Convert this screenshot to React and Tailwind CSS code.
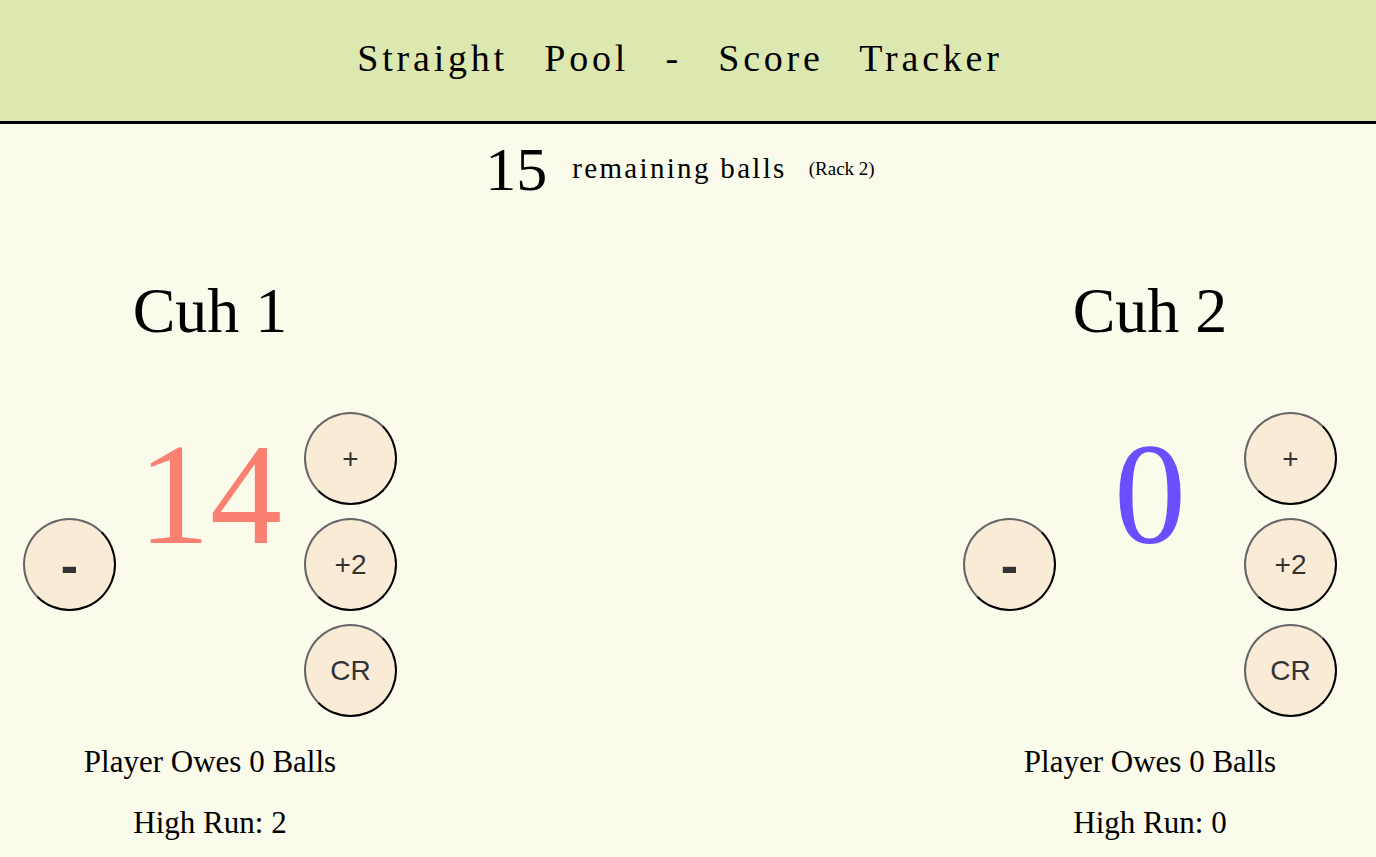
import React from 'react';

const serif = { fontFamily: '"Liberation Serif", "Times New Roman", serif' };

const RoundButton = ({ children, className = '' }) => (
  <button
    className={`w-[93px] h-[93px] rounded-full bg-[#faebd7] border-2 border-t-[#666] border-l-[#666] border-b-black border-r-black text-[#333] flex items-center justify-center ${className}`}
    style={{ fontFamily: '"Liberation Sans", Arial, sans-serif' }}
  >
    {children}
  </button>
);

const Player = ({ name, score, scoreColor, owes, highRun }) => (
  <section className="w-[420px] flex flex-col items-center">
    <h2 className="text-[64px] leading-none mt-[78px]">{name}</h2>

    <div className="flex items-center mt-[69px]">
      <RoundButton className="text-[52px] font-bold leading-none">-</RoundButton>
      <div className="w-[188px] self-start mt-[11px] text-center">
        <span className={`text-[144px] leading-none ${scoreColor}`}>{score}</span>
      </div>
      <div className="flex flex-col gap-[13px]">
        <RoundButton className="text-[28px]">+</RoundButton>
        <RoundButton className="text-[28px]">+2</RoundButton>
        <RoundButton className="text-[28px]">CR</RoundButton>
      </div>
    </div>

    <p className="text-[31px] leading-none mt-[29px]">Player Owes {owes} Balls</p>
    <p className="text-[31px] leading-none mt-[30px]">High Run: {highRun}</p>
  </section>
);

const App = () => {
  return (
    <div className="min-h-screen bg-[#fafbeb] text-black" style={serif}>
      {/* Header */}
      <header className="h-[124px] bg-[#dce8af] border-b-[3px] border-black">
        <div className="w-[1360px] h-full flex items-center justify-center pb-[6px]">
          <h1 className="text-[38px] tracking-[0.1em] [word-spacing:23px] leading-none">
            Straight Pool - Score Tracker
          </h1>
        </div>
      </header>

      <main className="w-[1360px]">
        {/* Balls left */}
        <div className="flex items-center justify-center mt-[13px] h-[64px]">
          <span className="text-[62px] leading-none">15</span>
          <span className="text-[29px] tracking-[0.08em] ml-[25px]">remaining balls</span>
          <span className="text-[19px] ml-[22px]">(Rack 2)</span>
        </div>

        {/* Players */}
        <div className="flex justify-between">
          <Player name="Cuh 1" score="14" scoreColor="text-[#fa8072]" owes={0} highRun={2} />
          <Player name="Cuh 2" score="0" scoreColor="text-[#6b4eff]" owes={0} highRun={0} />
        </div>
      </main>
    </div>
  );
};

export default App;
